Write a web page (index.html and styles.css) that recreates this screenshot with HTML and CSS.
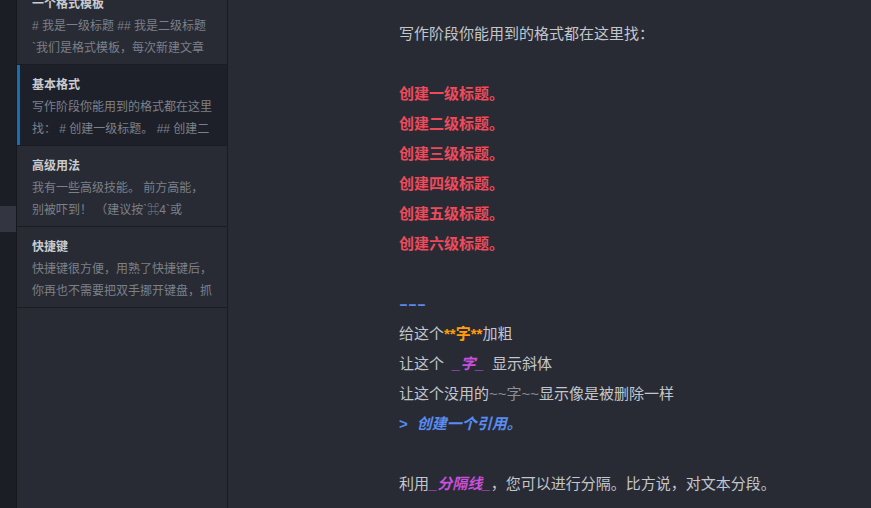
FILE: index.html
```html
<!DOCTYPE html>
<html lang="zh-CN">
<head>
  <meta charset="UTF-8" />
  <meta name="viewport" content="width=device-width, initial-scale=1.0"/>
  <title>基本格式</title>
  <link rel="stylesheet" href="styles.css">
</head>
<body>
  <div class="app">
    <!-- narrow library rail -->
    <nav class="rail">
      <div class="rail-item"></div>
    </nav>

    <!-- sheet list -->
    <aside class="sheets">
      <div class="sheets-scroll">
        <div class="sheet">
          <div class="sheet-title">一个格式模板</div>
          <div class="sheet-line"># 我是一级标题 ## 我是二级标题</div>
          <div class="sheet-line">`我们是格式模板，每次新建文章</div>
        </div>
        <div class="sheet active">
          <div class="sheet-title">基本格式</div>
          <div class="sheet-line">写作阶段你能用到的格式都在这里</div>
          <div class="sheet-line">找： # 创建一级标题。 ## 创建二</div>
        </div>
        <div class="sheet">
          <div class="sheet-title">高级用法</div>
          <div class="sheet-line">我有一些高级技能。 前方高能，</div>
          <div class="sheet-line">别被吓到！ （建议按`⌘4`或</div>
        </div>
        <div class="sheet">
          <div class="sheet-title">快捷键</div>
          <div class="sheet-line">快捷键很方便，用熟了快捷键后，</div>
          <div class="sheet-line">你再也不需要把双手挪开键盘，抓</div>
        </div>
      </div>
    </aside>

    <!-- editor -->
    <main class="editor">
      <p class="line">写作阶段你能用到的格式都在这里找：</p>
      <p class="line"></p>
      <p class="line heading">创建一级标题。</p>
      <p class="line heading">创建二级标题。</p>
      <p class="line heading">创建三级标题。</p>
      <p class="line heading">创建四级标题。</p>
      <p class="line heading">创建五级标题。</p>
      <p class="line heading">创建六级标题。</p>
      <p class="line"></p>
      <p class="line"><span class="rule">---</span></p>
      <p class="line">给这个<span class="strong">**字**</span>加粗</p>
      <p class="line">让这个 <span class="em spaced">_字_</span> 显示斜体</p>
      <p class="line">让这个没用的<span class="del">~~字~~</span>显示像是被删除一样</p>
      <p class="line quote"><span class="quote-mark">&gt;</span>创建一个引用。</p>
      <p class="line"></p>
      <p class="line">利用<span class="em">_分隔线_</span>，您可以进行分隔。比方说，对文本分段。</p>
    </main>
  </div>
</body>
</html>
```

FILE: styles.css
```css
/* Base */
body {
  margin: 0;
  height: 100vh;
  overflow: hidden;
  background: #282b34;
  font-family: "Liberation Sans", "Noto Sans CJK SC", sans-serif;
}

.app {
  display: flex;
  height: 100vh;
}

/* Library rail */
.rail {
  width: 16px;
  flex: none;
  background: #1c1e25;
  border-right: 1px solid #16181d;
}

.rail-item {
  margin-top: 206px;
  height: 26px;
  background: #333641;
}

/* Sheet list */
.sheets {
  width: 210px;
  flex: none;
  background: #282b34;
  border-right: 1px solid #1a1c22;
  overflow: hidden;
}

.sheets-scroll {
  margin-top: -16px;
}

.sheet {
  height: 81px;
  box-sizing: border-box;
  padding: 10px 12px 0 15px;
  border-bottom: 1px solid #1a1c22;
  overflow: hidden;
}

.sheet.active {
  background: #1e2029;
  box-shadow: inset 3px 0 0 #1370b2;
}

.sheet-title {
  font-size: 12px;
  line-height: 20px;
  font-weight: bold;
  color: #c9ccd2;
  margin-bottom: 1px;
}

.sheet-line {
  font-size: 12px;
  line-height: 22px;
  color: #7c8089;
  white-space: nowrap;
  overflow: hidden;
}

/* Editor */
.editor {
  flex: 1;
  padding: 19px 0 0 171px;
}

.line {
  margin: 0;
  height: 30px;
  font-size: 15px;
  line-height: 30px;
  color: #c3c6cd;
  white-space: nowrap;
}

.heading {
  font-weight: bold;
  color: #ee4a5b;
}

.rule {
  display: inline-block;
  color: #5b87ea;
  font-weight: bold;
  transform: scaleX(1.8);
  transform-origin: left center;
}

.strong {
  font-weight: bold;
  color: #ff9d0a;
}

.em {
  font-style: italic;
  font-weight: bold;
  color: #c850dc;
}

.em.spaced {
  margin: 0 4px;
}

.del {
  color: #8b8f98;
}

.quote {
  font-style: italic;
  font-weight: bold;
  color: #5a8cf0;
}

.quote-mark {
  font-style: normal;
  margin-right: 9px;
}
```
